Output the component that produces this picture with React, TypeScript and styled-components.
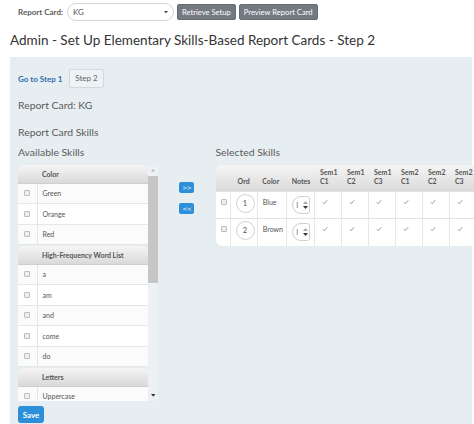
import React from "react";
import styled, { createGlobalStyle } from "styled-components";

const GlobalStyle = createGlobalStyle`
  html, body {
    margin: 0;
    padding: 0;
    background: #ffffff;
    overflow: hidden;
  }
  body {
    font-family: Lato, "Open Sans", "Liberation Sans", sans-serif;
    color: #555;
  }
  * { box-sizing: border-box; }
`;

/* ---------- data ---------- */

const skillGroups = [
  { title: "Color", items: ["Green", "Orange", "Red"] },
  { title: "High-Frequency Word List", items: ["a", "am", "and", "come", "do"] },
  { title: "Letters", items: ["Uppercase"] },
];

const selectedSkills = [
  { ord: 1, name: "Blue" },
  { ord: 2, name: "Brown" },
];

const gradeColumns = [
  ["Sem1", "C1"],
  ["Sem1", "C2"],
  ["Sem1", "C3"],
  ["Sem2", "C1"],
  ["Sem2", "C2"],
  ["Sem2", "C3"],
];

const fixedWidths = [14.5, 27.3, 29.4, 28.3];
const gradeWidth = 27;
const tableWidth =
  fixedWidths.reduce((a, b) => a + b, 0) + gradeWidth * gradeColumns.length;

/* ---------- page & top bar ---------- */

const Page = styled.div`
  width: 474px;
  height: 424px;
  overflow: hidden;
  display: flex;
  flex-direction: column;
`;

const TopBar = styled.div`
  display: flex;
  align-items: center;
  gap: 3px;
  height: 24px;
  padding-left: 18px;
`;

const FieldLabel = styled.span`
  font-size: 8px;
  font-weight: 700;
  color: #5c5c5c;
  margin-right: 1px;
`;

const SelectBox = styled.div`
  width: 107px;
  height: 18px;
  border: 1px solid #d6d6d6;
  border-radius: 9px;
  background: #fff;
  display: flex;
  align-items: center;
  justify-content: space-between;
  padding: 0 5px 0 5px;
  font-size: 8px;
  color: #555;
`;

const GrayButton = styled.button`
  height: 16px;
  padding: 0 4px;
  border: 1px solid #656c73;
  border-radius: 2px;
  background: #737a82;
  color: #fff;
  font-family: inherit;
  font-size: 7.6px;
  line-height: 14px;
  cursor: pointer;
`;

const Title = styled.h1`
  margin: 6px 0 0 10px;
  font-size: 13.5px;
  font-weight: 400;
  line-height: 20px;
  color: #333;
  white-space: nowrap;
`;

/* ---------- main panel ---------- */

const Panel = styled.div`
  margin: 7px 0 0 10px;
  width: 462px;
  flex: 1;
  background: #e7eef1;
  padding: 12px 0 0 8px;
  display: flex;
  flex-direction: column;
  min-height: 0;
`;

const StepNav = styled.div`
  display: flex;
  align-items: center;
  gap: 7px;
  height: 19px;
`;

const StepLink = styled.a`
  font-size: 8px;
  font-weight: 700;
  color: #2f6fae;
  text-decoration: none;
`;

const StepTab = styled.span`
  height: 19px;
  padding: 0 5px;
  border: 1px solid #d2d9dd;
  border-radius: 2px;
  background: #edf2f4;
  font-size: 8px;
  line-height: 17px;
  color: #666;
`;

const Info = styled.div<{ $top: number }>`
  margin-top: ${(p) => p.$top}px;
  font-size: 10.4px;
  line-height: 14px;
  color: #5a5a5a;
`;

const SkillsArea = styled.div`
  display: flex;
  margin-top: 6px;
  height: 256px;
`;

const Column = styled.div<{ $w?: number }>`
  display: flex;
  flex-direction: column;
  gap: 6px;
  ${(p) => (p.$w ? `width: ${p.$w}px; flex: none;` : "flex: 1; min-width: 0;")}
`;

const SubHead = styled.div`
  font-size: 10.4px;
  line-height: 14px;
  color: #5a5a5a;
  white-space: nowrap;
`;

/* ---------- available skills list ---------- */

const ListFrame = styled.div`
  display: flex;
  height: 236px;
`;

const ListViewport = styled.div`
  width: 130px;
  height: 236px;
  overflow: hidden;
  display: flex;
  flex-direction: column;
  gap: 1px;
`;

const Group = styled.div`
  display: flex;
  flex-direction: column;
`;

const GroupHeader = styled.div`
  height: 18.5px;
  flex: none;
  display: flex;
  align-items: center;
  padding-left: 24px;
  border-radius: 6px 6px 0 0;
  background: linear-gradient(#f5f5f5, #d9d9d9);
  border-bottom: 1px solid #cfcfcf;
  font-size: 7px;
  font-weight: 700;
  color: #555;
`;

const SkillRow = styled.div<{ $odd: boolean }>`
  height: 20.5px;
  flex: none;
  display: grid;
  grid-template-columns: 19.5px 1fr;
  background: ${(p) => (p.$odd ? "#fbfbfb" : "#ffffff")};
  border-bottom: 1px solid #e6e6e6;
`;

const CheckCell = styled.div`
  display: flex;
  align-items: center;
  justify-content: center;
  border-right: 1px solid #e4e4e4;
`;

const TextCell = styled.div`
  display: flex;
  align-items: center;
  padding-left: 5px;
  font-size: 7px;
  color: #555;
`;

const Box = styled.span`
  display: inline-block;
  width: 6px;
  height: 6px;
  border: 1px solid #bdbdbd;
  border-radius: 1px;
  background: #efefef;
`;

const ScrollRail = styled.div`
  width: 10px;
  height: 236px;
  display: flex;
  flex-direction: column;
  align-items: center;
  background: #edf1f3;
`;

const RailArrow = styled.div`
  height: 11px;
  width: 10px;
  display: flex;
  align-items: center;
  justify-content: center;
  flex: none;
`;

const RailTrack = styled.div`
  flex: 1;
  width: 10px;
  display: flex;
  flex-direction: column;
`;

const RailThumb = styled.div`
  height: 107px;
  width: 10px;
  background: #c6c6c6;
`;

/* ---------- move buttons ---------- */

const MoveButtons = styled.div`
  width: 57.5px;
  flex: none;
  display: flex;
  flex-direction: column;
  align-items: center;
  gap: 10.5px;
  padding-top: 36.5px;
`;

const BlueButton = styled.button`
  width: 15px;
  height: 11px;
  padding: 0;
  border: none;
  border-radius: 2px;
  background: #2d8fd9;
  color: #fff;
  font-family: "DejaVu Sans", sans-serif;
  font-size: 6px;
  font-weight: 400;
  line-height: 11px;
  letter-spacing: -0.6px;
`;

/* ---------- selected skills table ---------- */

const TableCard = styled.div`
  width: ${tableWidth}px;
  flex: none;
  border-radius: 6px;
  overflow: hidden;
  background: #fff;
  box-shadow: 0 0 1px rgba(0, 0, 0, 0.08);
`;

const Grid = styled.table`
  border-collapse: collapse;
  table-layout: fixed;
  width: ${tableWidth}px;
`;

const Col = styled.col<{ $w: number }>`
  width: ${(p) => p.$w}px;
`;

const HeadRow = styled.tr`
  height: 26.7px;
  background: linear-gradient(#f5f5f5, #d9d9d9);
`;

const Th = styled.th<{ $center?: boolean }>`
  padding: 0 5px 4.5px;
  vertical-align: bottom;
  text-align: ${(p) => (p.$center ? "center" : "left")};
  font-size: 7px;
  font-weight: 700;
  line-height: 9.5px;
  color: #555;
  white-space: nowrap;
`;

const BodyRow = styled.tr`
  height: 27.2px;
`;

const Td = styled.td<{ $center?: boolean }>`
  padding: 5px 5px 0;
  vertical-align: top;
  text-align: ${(p) => (p.$center ? "center" : "left")};
  border-top: 1px solid #e3e3e3;
  border-left: 1px solid #e8e8e8;
  font-size: 7px;
  line-height: 10px;
  color: #555;
  &:first-child { border-left: none; }
`;

const RowBox = styled(Box)`
  margin-top: 2px;
`;

const OrdCircle = styled.div`
  width: 19px;
  height: 19px;
  margin: -3px auto 0;
  border: 1px solid #cfcfcf;
  border-radius: 50%;
  display: flex;
  align-items: center;
  justify-content: center;
  font-size: 7.5px;
  color: #555;
  background: #fff;
`;

const Spinner = styled.div`
  width: 18px;
  height: 18px;
  margin-top: -1px;
  border: 1px solid #cfcfcf;
  border-radius: 9px 3px 3px 9px;
  background: #fff;
  display: flex;
  align-items: center;
  justify-content: space-between;
  padding: 0 1px 0 3px;
  font-size: 7px;
  color: #666;
`;

const SpinArrows = styled.div`
  display: flex;
  flex-direction: column;
  gap: 2px;
`;

const TickBox = styled.span`
  display: inline-flex;
  width: 7px;
  height: 7px;
  margin: 1px 0 0 1px;
  align-items: center;
  justify-content: center;
`;

const SaveButton = styled.button`
  align-self: flex-start;
  margin-top: 5px;
  margin-left: 0;
  width: 26px;
  height: 17px;
  padding: 0;
  border: none;
  border-radius: 3px;
  background: #2d8fd9;
  color: #fff;
  font-family: inherit;
  font-size: 8px;
  font-weight: 700;
`;

/* ---------- small drawings ---------- */

const Triangle = ({ up, color, w = 5 }: { up?: boolean; color: string; w?: number }) => (
  <svg width={w} height={w * 0.6} viewBox="0 0 10 6">
    {up ? <path d="M0 6 L5 0 L10 6 Z" fill={color} /> : <path d="M0 0 L10 0 L5 6 Z" fill={color} />}
  </svg>
);

const Tick = () => (
  <svg width="6" height="6" viewBox="0 0 6 6">
    <path d="M0.8 3.2 L2.3 4.7 L5.2 1.2" fill="none" stroke="#9a9a9a" strokeWidth="1" />
  </svg>
);

/* ---------- component ---------- */

export default function App() {
  return (
    <>
      <GlobalStyle />
      <Page>
        <TopBar>
          <FieldLabel>Report Card:</FieldLabel>
          <SelectBox>
            <span>KG</span>
            <Triangle color="#444" w={4} />
          </SelectBox>
          <GrayButton>Retrieve Setup</GrayButton>
          <GrayButton>Preview Report Card</GrayButton>
        </TopBar>

        <Title>Admin - Set Up Elementary Skills-Based Report Cards - Step 2</Title>

        <Panel>
          <StepNav>
            <StepLink href="#">Go to Step 1</StepLink>
            <StepTab>Step 2</StepTab>
          </StepNav>

          <Info $top={10}>Report Card: KG</Info>
          <Info $top={13}>Report Card Skills</Info>

          <SkillsArea>
            <Column $w={140}>
              <SubHead>Available Skills</SubHead>
              <ListFrame>
                <ListViewport>
                  {skillGroups.map((g) => (
                    <Group key={g.title}>
                      <GroupHeader>{g.title}</GroupHeader>
                      {g.items.map((item, i) => (
                        <SkillRow key={item} $odd={i % 2 === 0}>
                          <CheckCell>
                            <Box />
                          </CheckCell>
                          <TextCell>{item}</TextCell>
                        </SkillRow>
                      ))}
                    </Group>
                  ))}
                </ListViewport>
                <ScrollRail>
                  <RailArrow>
                    <Triangle up color="#b5b5b5" w={4} />
                  </RailArrow>
                  <RailTrack>
                    <RailThumb />
                  </RailTrack>
                  <RailArrow>
                    <Triangle color="#333" w={4.5} />
                  </RailArrow>
                </ScrollRail>
              </ListFrame>
            </Column>

            <MoveButtons>
              <BlueButton>&gt;&gt;</BlueButton>
              <BlueButton>&lt;&lt;</BlueButton>
            </MoveButtons>

            <Column>
              <SubHead>Selected Skills</SubHead>
              <TableCard>
                <Grid>
                  <colgroup>
                    {fixedWidths.map((w, i) => (
                      <Col key={i} $w={w} />
                    ))}
                    {gradeColumns.map((_, i) => (
                      <Col key={`g${i}`} $w={gradeWidth} />
                    ))}
                  </colgroup>
                  <thead>
                    <HeadRow>
                      <Th />
                      <Th $center>Ord</Th>
                      <Th>Color</Th>
                      <Th>Notes</Th>
                      {gradeColumns.map(([sem, c]) => (
                        <Th key={sem + c}>
                          {sem}
                          <br />
                          {c}
                        </Th>
                      ))}
                    </HeadRow>
                  </thead>
                  <tbody>
                    {selectedSkills.map((s) => (
                      <BodyRow key={s.ord}>
                        <Td $center>
                          <RowBox />
                        </Td>
                        <Td>
                          <OrdCircle>{s.ord}</OrdCircle>
                        </Td>
                        <Td>{s.name}</Td>
                        <Td>
                          <Spinner>
                            <span>I</span>
                            <SpinArrows>
                              <Triangle up color="#aaa" w={5} />
                              <Triangle color="#333" w={5} />
                            </SpinArrows>
                          </Spinner>
                        </Td>
                        {gradeColumns.map(([sem, c]) => (
                          <Td key={sem + c}>
                            <TickBox>
                              <Tick />
                            </TickBox>
                          </Td>
                        ))}
                      </BodyRow>
                    ))}
                  </tbody>
                </Grid>
              </TableCard>
            </Column>
          </SkillsArea>

          <SaveButton>Save</SaveButton>
        </Panel>
      </Page>
    </>
  );
}
